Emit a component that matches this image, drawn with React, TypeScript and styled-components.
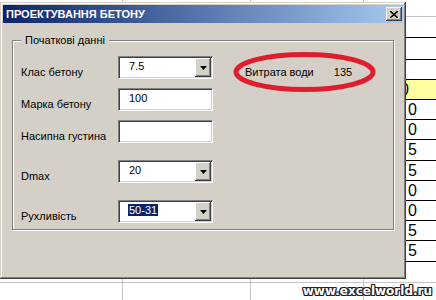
import styled, { createGlobalStyle } from "styled-components";

const GlobalStyle = createGlobalStyle`
  html, body {
    margin: 0;
    padding: 0;
    background: #fff;
  }
  body {
    font-family: "Liberation Sans", Arial, sans-serif;
  }
`;

const grid = "#c4c4c4";

const Sheet = styled.div`
  position: relative;
  width: 436px;
  height: 300px;
  overflow: hidden;
  display: flex;
  justify-content: flex-end;
  background:
    linear-gradient(${grid}, ${grid}) 122px 0 / 1px 100% no-repeat,
    linear-gradient(${grid}, ${grid}) 250px 0 / 1px 100% no-repeat,
    linear-gradient(${grid}, ${grid}) 363px 0 / 1px 100% no-repeat,
    linear-gradient(${grid}, ${grid}) 0 282px / 100% 1px no-repeat,
    #fff;
`;

const Column = styled.div`
  width: 36px;
  display: flex;
  flex-direction: column;
`;

const Cell = styled.div<{ $h: number; $line: string; $yellow?: boolean; $indent: number }>`
  box-sizing: border-box;
  height: ${(p) => p.$h}px;
  border-bottom: 1px solid ${(p) => p.$line};
  background: ${(p) => (p.$yellow ? "#ffffa0" : "#fff")};
  padding-left: ${(p) => p.$indent}px;
  display: flex;
  align-items: center;
  font-size: 16px;
  color: #000;
`;

const Window = styled.div`
  position: absolute;
  left: 0;
  top: 2px;
  width: 406px;
  height: 277px;
  box-sizing: border-box;
  padding: 3px;
  background: #d4d0c8;
  box-shadow: inset -1px -1px #404040, inset 1px 1px #d4d0c8,
    inset -2px -2px #808080, inset 2px 2px #fff;
  display: flex;
  flex-direction: column;
`;

const TitleBar = styled.div`
  height: 18px;
  display: flex;
  align-items: center;
  justify-content: space-between;
  padding: 0 1px 0 3px;
  background: linear-gradient(to right, #0a246a, #a6caf0);
`;

const Title = styled.span`
  color: #fff;
  font-weight: bold;
  font-size: 11px;
`;

const CloseButton = styled.div`
  width: 16px;
  height: 14px;
  background: #d4d0c8;
  box-shadow: inset -1px -1px #404040, inset 1px 1px #fff,
    inset -2px -2px #808080;
  display: flex;
  align-items: center;
  justify-content: center;
`;

const GroupBox = styled.div`
  position: relative;
  margin: 17px 9px 0;
  border: 1px solid #808080;
  box-shadow: inset 1px 1px #fff, 1px 1px #fff;
  padding: 15px 0 6px 8px;
  display: flex;
`;

const Legend = styled.span`
  position: absolute;
  top: -7px;
  left: 8px;
  padding: 0 4px;
  background: #d4d0c8;
  font-size: 11px;
  line-height: 13px;
`;

const Form = styled.div`
  display: flex;
  flex-direction: column;
`;

const Row = styled.div<{ $gap: number }>`
  display: flex;
  align-items: center;
  height: 23px;
  margin-top: ${(p) => p.$gap}px;
`;

const Label = styled.span`
  width: 97px;
  padding-top: 8px;
  font-size: 11px;
`;

const Field = styled.div`
  width: 95px;
  height: 23px;
  box-sizing: border-box;
  border: 1px solid;
  border-color: #808080 #fff #fff #808080;
  padding: 1px;
  box-shadow: inset 1px 1px #404040, inset -1px -1px #d4d0c8;
  background: #fff;
  display: flex;
  align-items: stretch;
`;

const Value = styled.span`
  flex: 1;
  display: flex;
  align-items: center;
  padding: 0 0 3px 9px;
  font-size: 11px;
`;

const Selected = styled.span`
  background: #0a246a;
  color: #fff;
  line-height: 12px;
  padding: 0 1px;
  margin-left: -1px;
`;

const DropButton = styled.div`
  width: 16px;
  background: #d4d0c8;
  box-shadow: inset -1px -1px #404040, inset 1px 1px #fff,
    inset -2px -2px #808080;
  display: flex;
  align-items: center;
  justify-content: center;
`;

const Result = styled.div`
  position: relative;
  margin-left: 32px;
  height: 23px;
  display: flex;
  gap: 20px;
  padding-top: 8px;
  box-sizing: border-box;
  align-items: center;
  font-size: 11px;
`;

const Ring = styled.svg`
  position: absolute;
  left: -12px;
  top: -4px;
`;

const Watermark = styled.div`
  position: absolute;
  right: 4px;
  bottom: 3px;
  font-family: "DejaVu Sans", sans-serif;
  font-weight: bold;
  font-size: 12px;
  line-height: 12px;
  color: #fff;
  text-shadow: -1px 0 #222, 1px 0 #222, 0 -1px #222, 0 1px #222,
    1px 1px #222, -1px -1px #222, 1px -1px #222, -1px 1px #222;
`;

const cells = [
  { h: 17, line: grid },
  { h: 21 },
  { h: 22 },
  { h: 20 },
  { h: 20, v: "0", yellow: true, indent: 0 },
  { h: 20, v: "0" },
  { h: 20, v: "0" },
  { h: 21, v: "5" },
  { h: 20, v: "5" },
  { h: 20, v: "0" },
  { h: 20, v: "0" },
  { h: 20, v: "5" },
  { h: 21, v: "5" },
];

const Arrow = () => (
  <svg width="7" height="4" viewBox="0 0 7 4">
    <polygon points="0,0 7,0 3.5,4" fill="#000" />
  </svg>
);

function Combo({ children }: { children: React.ReactNode }) {
  return (
    <Field>
      <Value>{children}</Value>
      <DropButton>
        <Arrow />
      </DropButton>
    </Field>
  );
}

export default function App() {
  return (
    <>
      <GlobalStyle />
      <Sheet>
        <Column>
          {cells.map((c, i) => (
            <Cell
              key={i}
              $h={c.h}
              $line={c.line ?? "#000"}
              $yellow={c.yellow}
              $indent={c.indent ?? 8}
            >
              {c.v}
            </Cell>
          ))}
        </Column>

        <Window>
          <TitleBar>
            <Title>ПРОЕКТУВАННЯ БЕТОНУ</Title>
            <CloseButton>
              <svg width="8" height="7" viewBox="0 0 8 7">
                <path d="M0 0 L8 7 M8 0 L0 7" stroke="#000" strokeWidth="1.6" />
              </svg>
            </CloseButton>
          </TitleBar>

          <GroupBox>
            <Legend>Початкові данні</Legend>
            <Form>
              <Row $gap={0}>
                <Label>Клас бетону</Label>
                <Combo>7.5</Combo>
              </Row>
              <Row $gap={9}>
                <Label>Марка бетону</Label>
                <Field>
                  <Value>100</Value>
                </Field>
              </Row>
              <Row $gap={9}>
                <Label>Насипна густина</Label>
                <Field>
                  <Value />
                </Field>
              </Row>
              <Row $gap={17}>
                <Label>Dmax</Label>
                <Combo>20</Combo>
              </Row>
              <Row $gap={17}>
                <Label>Рухливість</Label>
                <Combo>
                  <Selected>50-31</Selected>
                </Combo>
              </Row>
            </Form>

            <Result>
              <span>Витрата води</span>
              <span>135</span>
              <Ring width="143" height="40" viewBox="0 0 143 40">
                <ellipse
                  cx="71.5"
                  cy="20"
                  rx="68.5"
                  ry="17.5"
                  fill="none"
                  stroke="#de1e2c"
                  strokeWidth="5"
                />
              </Ring>
            </Result>
          </GroupBox>
        </Window>

        <Watermark>www.excelworld.ru</Watermark>
      </Sheet>
    </>
  );
}
